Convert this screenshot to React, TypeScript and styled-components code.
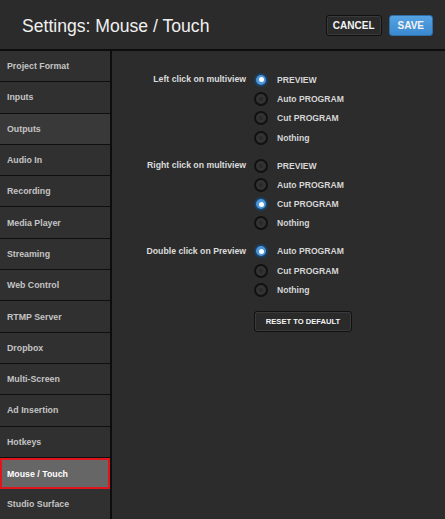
import { createGlobalStyle } from 'styled-components';
import styled, { css } from 'styled-components';

const GlobalStyle = createGlobalStyle`
    html, body {
        margin: 0;
        padding: 0;
        background: #2b2b2b;
    }
    body {
        font-family: 'Liberation Sans', Arial, sans-serif;
    }
`;

const Page = styled.div`
    width: 445px;
    height: 519px;
    display: flex;
    flex-direction: column;
    background: #2b2b2b;
    overflow: hidden;
`;

const Header = styled.header`
    height: 49px;
    flex: none;
    display: flex;
    align-items: center;
    justify-content: space-between;
    padding: 0 12px 0 22px;
    border-bottom: 2px solid #0d0d0d;
    background: #2b2b2b;
`;

const Title = styled.h1`
    margin: 0;
    font-size: 17.6px;
    font-weight: normal;
    color: #f0f0f0;
    padding-top: 3px;
`;

const HeaderButtons = styled.div`
    display: flex;
    gap: 7px;
    margin-top: 1px;
`;

type ButtonProps = {
    $primary?: boolean;
};

const Button = styled.button<ButtonProps>`
    height: 21px;
    padding: 0 6px;
    border-radius: 3px;
    font-family: 'Liberation Sans', Arial, sans-serif;
    font-weight: bold;
    font-size: 10px;
    color: #f4f4f4;
    border: 1px solid #111;
    background: #2a2a2a;
    box-shadow: inset 0 0 0 1px #3a3a3a;

    ${({ $primary }) =>
        $primary &&
        css`
            padding: 0 8px;
            border-color: #2f6da6;
            background: linear-gradient(#55a3e3, #3a88cf);
            box-shadow: none;
        `}
`;

const Body = styled.div`
    flex: 1;
    display: flex;
    min-height: 0;
`;

const Sidebar = styled.nav`
    width: 110px;
    flex: none;
    display: flex;
    flex-direction: column;
    border-right: 2px solid #0d0d0d;
    background: #2d2d2d;
`;

type ItemProps = {
    $active?: boolean;
    $hover?: boolean;
};

const SidebarItem = styled.div<ItemProps>`
    box-sizing: border-box;
    height: 31.3px;
    flex: none;
    display: flex;
    align-items: center;
    padding-left: 7px;
    font-size: 8.8px;
    font-weight: bold;
    color: #c4c4c4;
    background: ${({ $hover }) => ($hover ? '#393939' : '#303030')};
    border-bottom: 1.5px solid #0f0f0f;

    ${({ $active }) =>
        $active &&
        css`
            background: #666;
            color: #fff;
            border: 2.5px solid #e0141b;
            padding-left: 5px;
        `}
`;

const Main = styled.main`
    flex: 1;
    padding-top: 19px;
    display: flex;
    flex-direction: column;
    background: #2c2c2c;
`;

const Group = styled.section`
    display: grid;
    grid-template-columns: 134px 1fr;
    column-gap: 8px;
    margin-bottom: 8.7px;
`;

const GroupLabel = styled.div`
    text-align: right;
    font-size: 8.7px;
    font-weight: bold;
    color: #dcdcdc;
    height: 19.3px;
    line-height: 19.3px;
`;

const Options = styled.div`
    display: flex;
    flex-direction: column;
`;

const Option = styled.label`
    height: 19.3px;
    display: flex;
    align-items: center;
    gap: 9px;
    font-size: 8.6px;
    font-weight: bold;
    color: #d6d6d6;
`;

type RadioProps = {
    $checked?: boolean;
};

const Radio = styled.span<RadioProps>`
    box-sizing: border-box;
    width: 14px;
    height: 14px;
    border-radius: 50%;
    border: 2px solid #111;
    background: #333;
    display: flex;
    align-items: center;
    justify-content: center;

    &::after {
        content: '';
        width: 4px;
        height: 4px;
        border-radius: 50%;
        background: #2a2a2a;
    }

    ${({ $checked }) =>
        $checked &&
        css`
            border-color: #1b3e5e;
            background: #4a96d8;
            &::after {
                width: 5px;
                height: 5px;
                background: #fff;
            }
        `}
`;

const ResetRow = styled.div`
    padding-left: 142px;
    margin-top: 2px;
`;

const ResetButton = styled(Button)`
    width: 98px;
    height: 21px;
    font-size: 7.6px;
    padding: 0;
`;

const navItems = [
    'Project Format',
    'Inputs',
    'Outputs',
    'Audio In',
    'Recording',
    'Media Player',
    'Streaming',
    'Web Control',
    'RTMP Server',
    'Dropbox',
    'Multi-Screen',
    'Ad Insertion',
    'Hotkeys',
    'Mouse / Touch',
    'Studio Surface',
];

const groups = [
    {
        label: 'Left click on multiview',
        options: ['PREVIEW', 'Auto PROGRAM', 'Cut PROGRAM', 'Nothing'],
        selected: 0,
    },
    {
        label: 'Right click on multiview',
        options: ['PREVIEW', 'Auto PROGRAM', 'Cut PROGRAM', 'Nothing'],
        selected: 2,
    },
    {
        label: 'Double click on Preview',
        options: ['Auto PROGRAM', 'Cut PROGRAM', 'Nothing'],
        selected: 0,
    },
];

const App: React.FC = () => (
    <>
        <GlobalStyle />
        <Page>
            <Header>
                <Title>Settings: Mouse / Touch</Title>
                <HeaderButtons>
                    <Button>CANCEL</Button>
                    <Button $primary>SAVE</Button>
                </HeaderButtons>
            </Header>
            <Body>
                <Sidebar>
                    {navItems.map(item => (
                        <SidebarItem
                            key={item}
                            $active={item === 'Mouse / Touch'}
                            $hover={item === 'Outputs'}
                        >
                            {item}
                        </SidebarItem>
                    ))}
                </Sidebar>
                <Main>
                    {groups.map(group => (
                        <Group key={group.label}>
                            <GroupLabel>{group.label}</GroupLabel>
                            <Options>
                                {group.options.map((opt, i) => (
                                    <Option key={opt}>
                                        <Radio $checked={i === group.selected} />
                                        {opt}
                                    </Option>
                                ))}
                            </Options>
                        </Group>
                    ))}
                    <ResetRow>
                        <ResetButton>RESET TO DEFAULT</ResetButton>
                    </ResetRow>
                </Main>
            </Body>
        </Page>
    </>
);

export default App;
